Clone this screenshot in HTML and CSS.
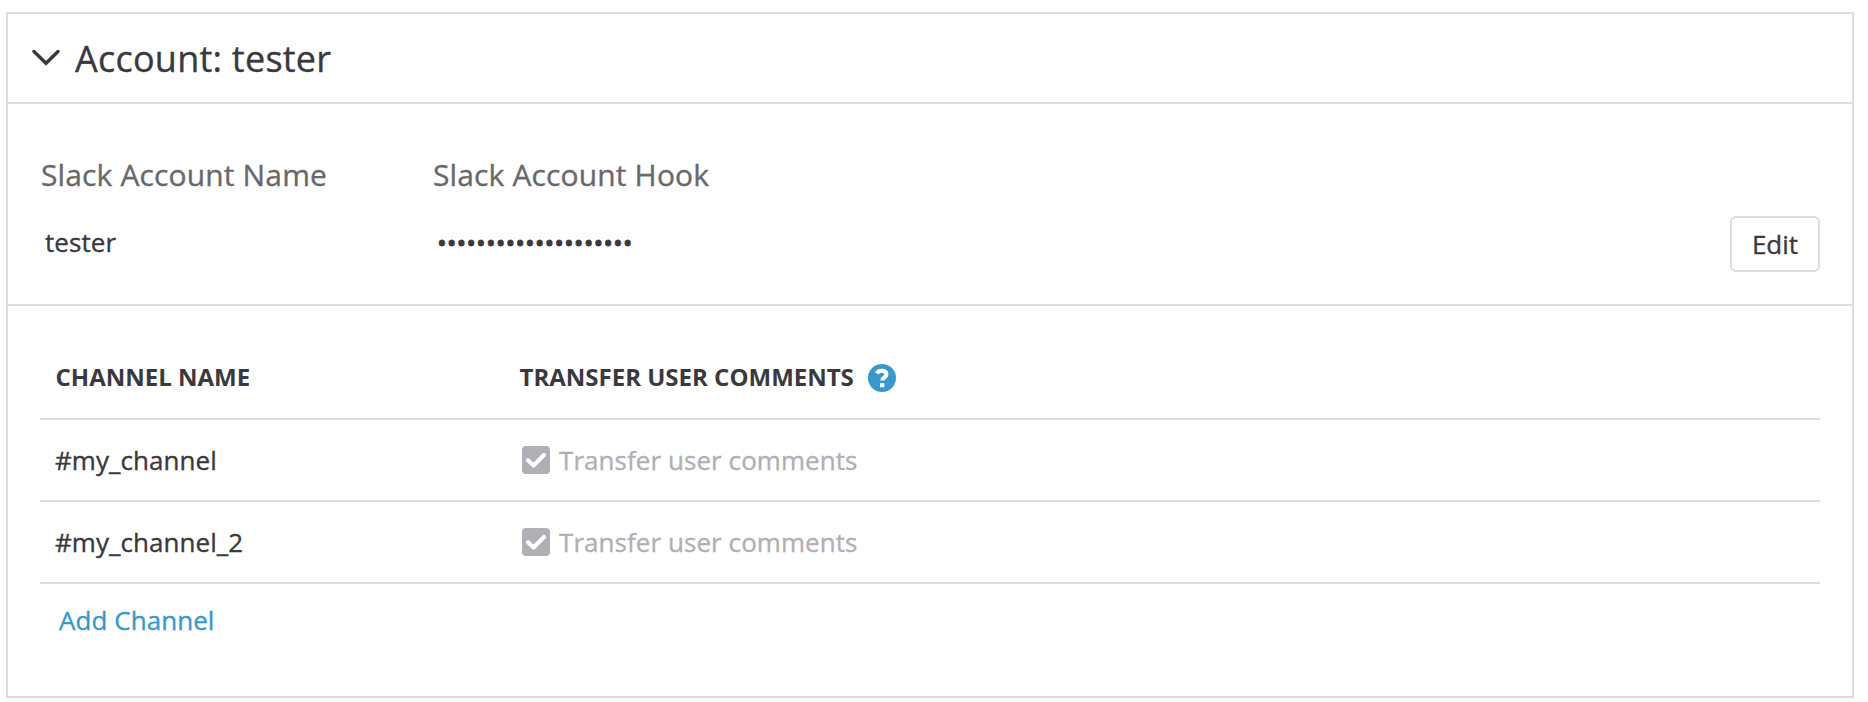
FILE: index.html
```html
<!DOCTYPE html>
<html lang="en">
<head>
<meta charset="utf-8">
<title>Account: tester</title>
<link rel="stylesheet" href="styles.css">
</head>
<body>
<section class="panel">
  <header class="panel-head">
    <svg class="chevron" viewBox="0 0 28 18"><path d="M2 2.5 14 14.3 26 2.5"/></svg>
    <h1 class="title">Account: tester</h1>
  </header>
  <div class="account">
    <div class="field name"><div class="label">Slack Account Name</div><div class="value">tester</div></div>
    <div class="field hook"><div class="label">Slack Account Hook</div><div class="value dots">••••••••••••••••••••</div></div>
    <button class="edit">Edit</button>
  </div>
  <div class="channels">
    <div class="row head"><div class="cell"><span class="head-text">CHANNEL NAME</span></div><div class="cell"><span class="head-text">TRANSFER USER COMMENTS</span><svg class="help" viewBox="0 0 28 28"><circle cx="14" cy="14" r="14"/><path d="M8.7 9.3C9.8 7.6 11.6 6.8 13.7 6.8c2.8 0 4.7 1.3 4.7 3.6 0 3.2-4.1 2.8-4.1 6.1"/><rect class="dot" x="12.1" y="19" width="4.2" height="4.3" rx=".5"/></svg></div></div>
    <div class="row"><div class="cell">#my_channel</div><div class="cell muted"><svg class="check" viewBox="0 0 28 28"><rect width="28" height="28" rx="4"/><path d="m6 14.2 5.5 5.3L22 9"/></svg><span class="check-text">Transfer user comments</span></div></div>
    <div class="row"><div class="cell">#my_channel_2</div><div class="cell muted"><svg class="check" viewBox="0 0 28 28"><rect width="28" height="28" rx="4"/><path d="m6 14.2 5.5 5.3L22 9"/></svg><span class="check-text">Transfer user comments</span></div></div>
    <a class="add">Add Channel</a>
  </div>
</section>
</body>
</html>
```
FILE: styles.css
```css
* { box-sizing: border-box; }
body { margin: 0; background: #fff; color: #3a393e; font: 400 26px/36px "Open Sans", "Noto Sans", sans-serif; letter-spacing: 0.06px; -webkit-text-stroke: 0.35px currentColor; }
.panel { margin: 12px 14px 0 6px; height: 686px; border: 2px solid #dddce1; }
.panel-head { display: flex; align-items: center; height: 90px; padding-left: 24px; border-bottom: 2px solid #dddce1; }
.chevron { width: 28px; height: 18px; fill: none; stroke: #3a393e; stroke-width: 3.4; stroke-linecap: round; }
.title { margin: 2px 0 0 15px; font-size: 36px; line-height: 50px; font-weight: 400; letter-spacing: 0.24px; }
.account { display: flex; align-items: flex-start; height: 202px; padding: 50px 32px 0 33px; border-bottom: 2px solid #dddce1; }
.name { width: 392px; }
.label { font-size: 30px; line-height: 42px; letter-spacing: 0.14px; color: #69696b; }
.value { margin-top: 28px; padding-left: 4px; }
.dots { letter-spacing: 0; -webkit-text-stroke: 0.8px currentColor; }
.edit { margin: 62px 0 0 auto; width: 90px; height: 56px; padding: 0; border: 2px solid #dddce1; border-radius: 6px; background: #fff; color: inherit; font: inherit; }
.channels { padding: 32px 32px 0; }
.row { display: grid; grid-template-columns: 464px 1fr; align-items: center; height: 82px; padding-left: 15px; border-bottom: 2px solid #dddce1; }
.head { font-size: 24px; font-weight: 700; letter-spacing: 0; -webkit-text-stroke: 0; }
.head-text { padding: 0 0 2px 0.5px; }
.cell { display: flex; align-items: center; }
.help { width: 28px; height: 28px; margin-left: 14.5px; fill: #3899ca; }
.help path { fill: none; stroke: #fff; stroke-width: 4.1; }
.help .dot { fill: #fff; }
.muted { color: #b1afb5; padding-left: 3px; }
.check { width: 28px; height: 28px; margin-right: 9px; fill: #b1afb5; }
.check path { fill: none; stroke: #fff; stroke-width: 4.2; stroke-linecap: round; stroke-linejoin: round; }
.add { display: inline-block; margin: 18px 0 0 19px; color: #3899ca; }
```
